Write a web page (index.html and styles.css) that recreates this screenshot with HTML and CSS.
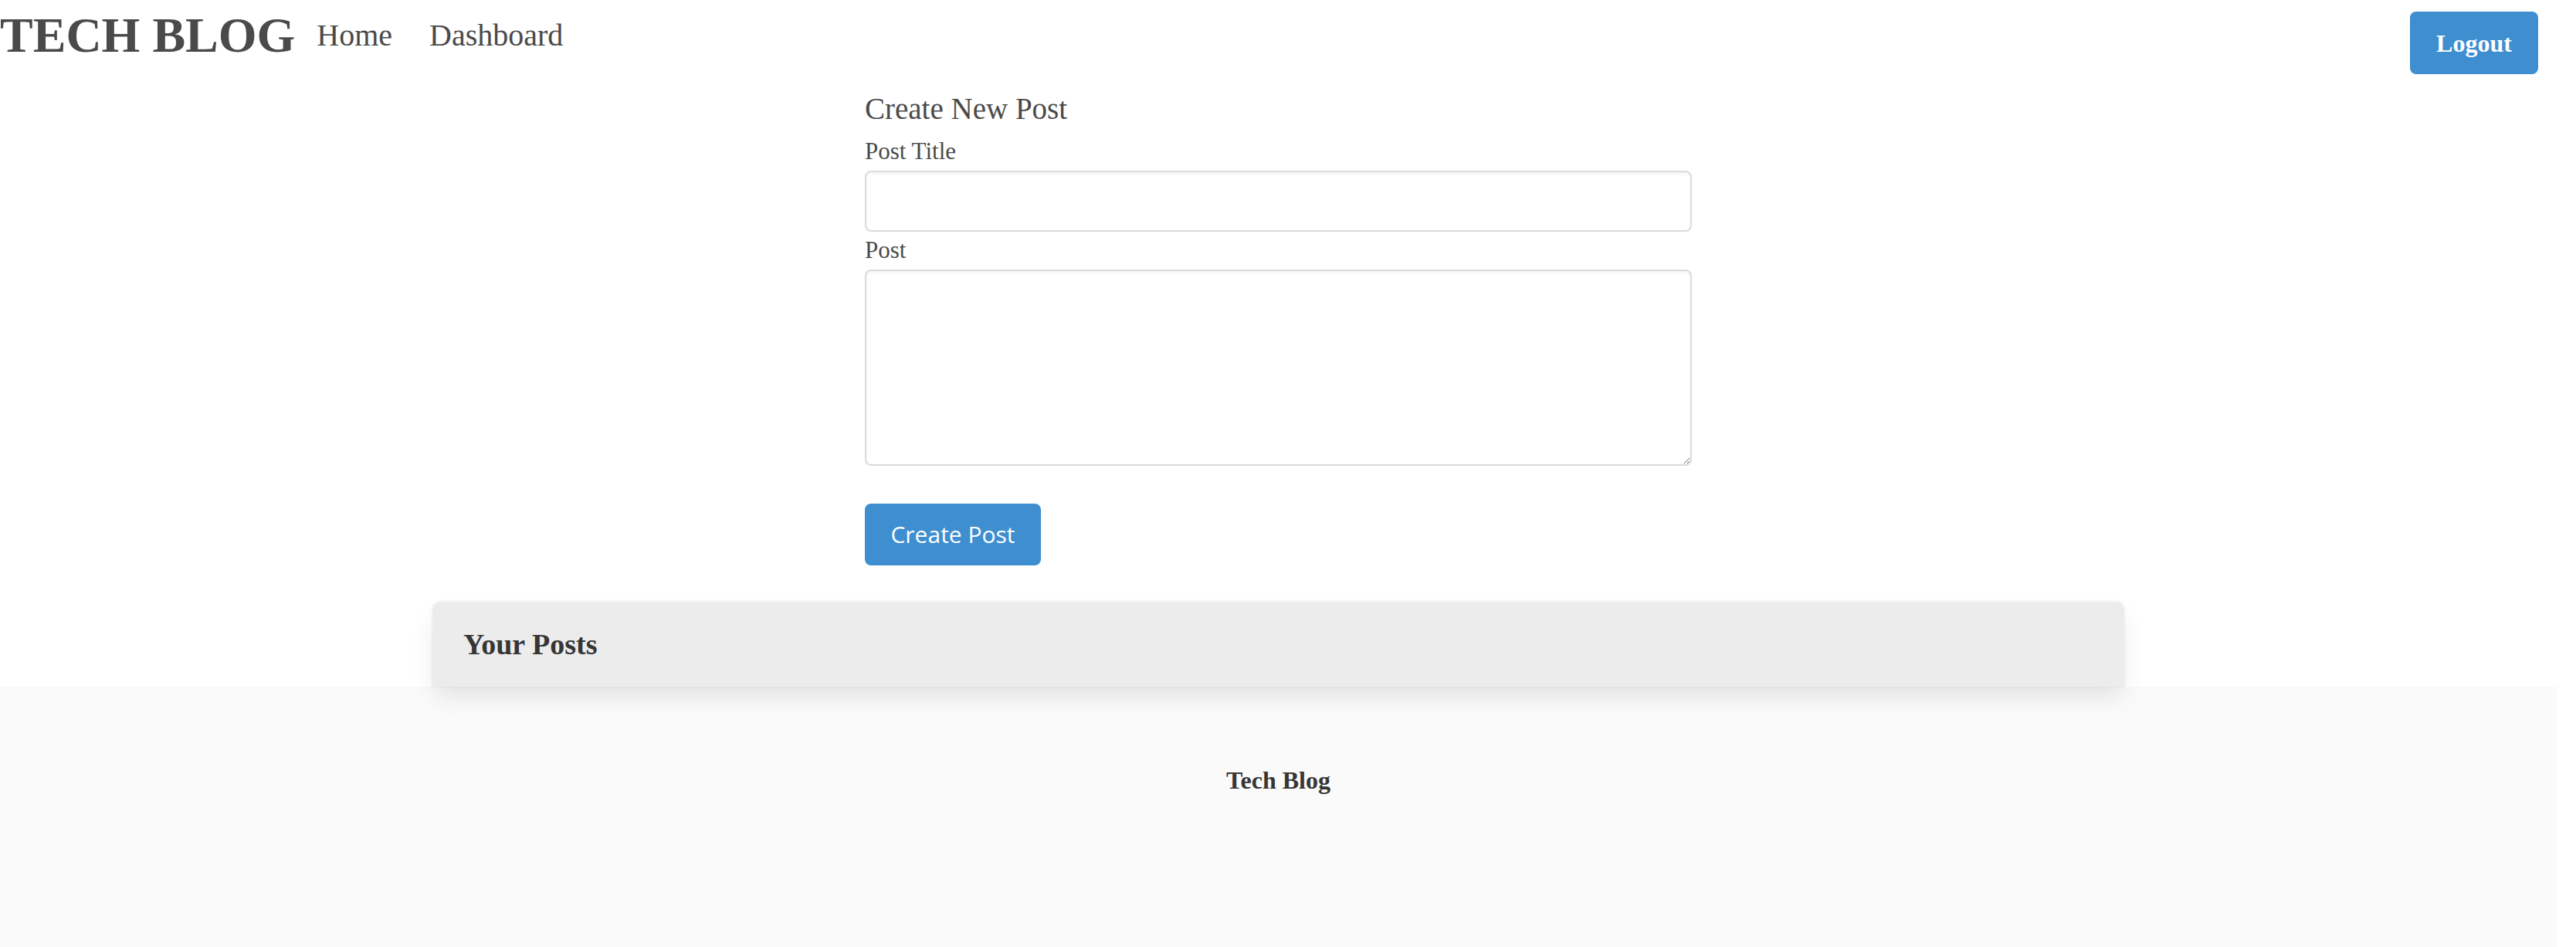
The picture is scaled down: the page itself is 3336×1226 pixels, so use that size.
FILE: index.html
```html
<!DOCTYPE html>
<html lang="en">
<head>
<meta charset="utf-8">
<title>Tech Blog</title>
<link rel="stylesheet" href="styles.css">
</head>
<body>
<div class="page">
  <header class="navbar">
    <a class="brand" href="#">TECH BLOG</a>
    <a class="nav-link" href="#">Home</a>
    <a class="nav-link" href="#">Dashboard</a>
    <button class="btn btn-logout" type="button">Logout</button>
  </header>

  <main class="main">
    <form class="post-form">
      <h2 class="form-title">Create New Post</h2>
      <label class="label" for="title">Post Title</label>
      <input class="input" id="title" type="text">
      <label class="label" for="body">Post</label>
      <textarea class="textarea" id="body"></textarea>
      <button class="btn btn-create" type="button">Create Post</button>
    </form>

    <section class="card">
      <h3 class="card-title">Your Posts</h3>
    </section>
  </main>

  <footer class="footer">
    <strong class="footer-text">Tech Blog</strong>
  </footer>
</div>
</body>
</html>
```

FILE: styles.css
```css
* {
  box-sizing: border-box;
}

html, body {
  margin: 0;
  padding: 0;
  background: #ffffff;
}

body {
  font-family: "Liberation Serif", "Times New Roman", serif;
  color: #4a4a4a;
  height: 1226px;
  overflow: hidden;
}

.page {
  width: 3311px;
  min-height: 1226px;
  display: flex;
  flex-direction: column;
}

/* Header */
.navbar {
  display: flex;
  align-items: flex-start;
  height: 96px;
}

.brand {
  font-size: 64px;
  line-height: 92px;
  font-weight: 700;
  color: #4a4a4a;
  text-decoration: none;
  margin-right: 4px;
}

.nav-link {
  font-size: 40px;
  line-height: 92px;
  color: #4a4a4a;
  text-decoration: none;
  padding: 0 24px;
}

.btn {
  border: none;
  background: #3e8ed0;
  color: #ffffff;
  border-radius: 8px;
  cursor: pointer;
  display: flex;
  align-items: center;
  justify-content: center;
  padding: 0;
}

.btn-logout {
  margin-left: auto;
  margin-top: 15px;
  margin-right: 24px;
  width: 166px;
  height: 81px;
  font-family: "Liberation Serif", "Times New Roman", serif;
  font-weight: 700;
  font-size: 32px;
  line-height: 1;
}

/* Main */
.main {
  display: flex;
  flex-direction: column;
  align-items: center;
}

.post-form {
  width: 1071px;
  padding-top: 21px;
  display: flex;
  flex-direction: column;
  align-items: flex-start;
}

.form-title {
  margin: 0 0 11px 0;
  font-size: 39px;
  line-height: 48px;
  font-weight: 400;
  color: #4a4a4a;
}

.label {
  display: block;
  font-size: 31px;
  line-height: 40px;
  color: #4a4a4a;
  margin-bottom: 5px;
}

.input,
.textarea {
  display: block;
  width: 100%;
  border: 2px solid #dbdbdb;
  border-radius: 8px;
  background: #ffffff;
  box-shadow: inset 0 2px 4px rgba(10, 10, 10, 0.05);
  font-family: "Liberation Serif", serif;
  font-size: 32px;
  outline: none;
}

.input {
  height: 79px;
  margin-bottom: 4px;
}

.textarea {
  height: 254px;
  resize: vertical;
  margin: 0;
}

.btn-create {
  margin-top: 49px;
  width: 228px;
  height: 80px;
  font-family: "Open Sans", "Noto Sans", sans-serif;
  font-size: 30px;
  line-height: 1;
}

/* Card */
.card {
  position: relative;
  z-index: 1;
  margin-top: 47px;
  width: 2191px;
  height: 110px;
  background: #ececec;
  border-radius: 10px 10px 0 0;
  box-shadow: 0 16px 32px -4px rgba(10, 10, 10, 0.1), 0 0 0 2px rgba(10, 10, 10, 0.02);
  display: flex;
  align-items: center;
  padding: 0 40px;
}

.card-title {
  margin: 0;
  font-size: 38px;
  line-height: 1;
  font-weight: 700;
  color: #363636;
}

/* Footer */
.footer {
  flex: 1;
  background: #fafafa;
  padding-top: 101px;
  display: flex;
  justify-content: center;
  align-items: flex-start;
}

.footer-text {
  font-size: 32px;
  line-height: 40px;
  font-weight: 700;
  color: #363636;
}
```
